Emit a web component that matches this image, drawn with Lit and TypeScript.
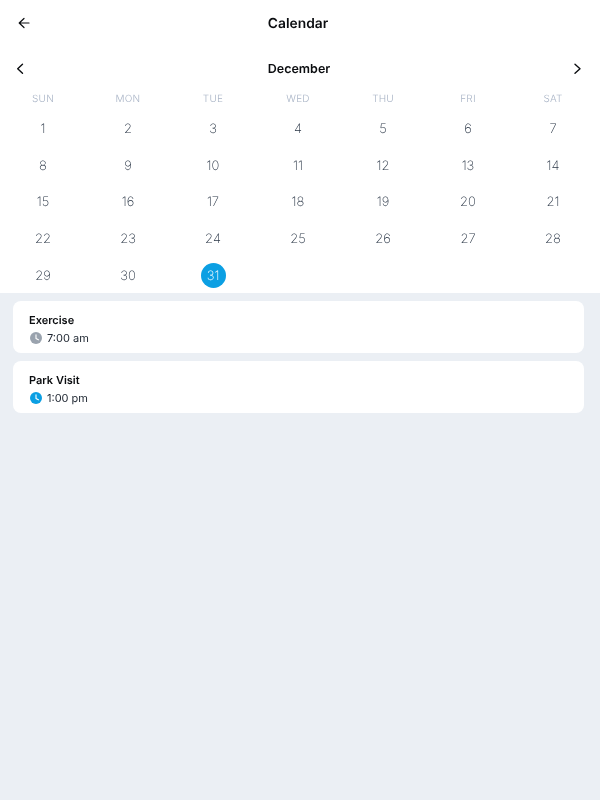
import { LitElement, html, css, svg } from "lit";
import { customElement } from "lit/decorators.js";

const DOW = ["SUN", "MON", "TUE", "WED", "THU", "FRI", "SAT"];
const DAYS = Array.from({ length: 31 }, (_, i) => i + 1);

const clock = (cls: string) => html`<svg class="clock ${cls}" viewBox="0 0 12 12" width="12" height="12">
  ${svg`<circle class="face" cx="6" cy="6" r="6"></circle>
  <path d="M6 2.8V6.4L8.4 7.8" fill="none" stroke="#fff" stroke-width="1.1" stroke-linecap="round" stroke-linejoin="round"></path>`}
</svg>`;

@customElement("app-root")
export class AppRoot extends LitElement {
  static styles = css`
    :host {
      display: block;
      width: 600px;
      height: 800px;
      background: #ebeff4;
      font-family: Inter, "Liberation Sans", sans-serif;
      color: #0b0d10;
      text-rendering: geometricPrecision;
    }
    .top { background: #fff; height: 293px; }
    .bar, .month, .grid, .title, .time { will-change: transform; }
    .bar {
      height: 47px;
      display: flex;
      align-items: center;
      justify-content: center;
      position: relative;
      padding-right: 4px;
      font-size: 13.8px;
      font-weight: 600;
    }
    .back { position: absolute; left: 17px; top: 16px; display: block; }
    .month {
      height: 18px;
      margin-top: 13px;
      padding: 0 17px 0 15px;
      display: flex;
      align-items: center;
      justify-content: space-between;
      font-size: 12.5px;
      font-weight: 600;
    }
    .grid {
      display: grid;
      grid-template-columns: repeat(7, 85px);
      padding: 0 0.5px;
    }
    .dow {
      height: 22px;
      margin-top: 10px;
      margin-bottom: 1px;
      display: flex;
      align-items: center;
      justify-content: center;
      font-size: 10px;
      font-weight: 300;
      color: #a9b4c6;
      letter-spacing: 0.2px;
    }
    .day {
      height: 36.6px;
      display: flex;
      align-items: center;
      justify-content: center;
      font-size: 13px;
      font-weight: 250;
      color: #2a3646;
    }
    .sel {
      width: 25px;
      height: 25px;
      border-radius: 50%;
      background: #0b9fe3;
      color: #fff;
      display: flex;
      align-items: center;
      justify-content: center;
    }
    .list {
      padding: 8px 16px 0 13px;
      display: flex;
      flex-direction: column;
      gap: 8px;
    }
    .card {
      background: #fff;
      border-radius: 8px;
      height: 52px;
      box-sizing: border-box;
      padding: 12px 16px 0;
    }
    .title { font-size: 11px; font-weight: 600; line-height: 14px; }
    .time {
      display: flex;
      align-items: center;
      gap: 5px;
      margin-top: 3px;
      height: 16px;
      font-size: 11px;
      font-weight: 400;
      color: #1d2530;
    }
    .clock { display: block; margin-left: 1px; }
    .gray .face { fill: #9aa3ae; }
    .blue .face { fill: #0b9fe3; }
  `;

  render() {
    return html`
      <div class="top">
        <div class="bar">
          <svg class="back" width="14" height="14" viewBox="0 0 14 14" fill="none" stroke="#0b0d10" stroke-width="1.2" stroke-linecap="round" stroke-linejoin="round">
            <path d="M12 7H2.2M7 2.5L2.2 7L7 11.5"></path>
          </svg>
          Calendar
        </div>
        <div class="month">
          <svg width="10" height="12" viewBox="0 0 10 12" fill="none" stroke="#0b0d10" stroke-width="1.4" stroke-linecap="round" stroke-linejoin="round"><path d="M7.5 1.3L2.7 5.8L7.5 10.3"></path></svg>
          <span>December</span>
          <svg width="10" height="12" viewBox="0 0 10 12" fill="none" stroke="#0b0d10" stroke-width="1.4" stroke-linecap="round" stroke-linejoin="round"><path d="M2 1.3L7 5.8L2 10.3"></path></svg>
        </div>
        <div class="grid">
          ${DOW.map((d) => html`<div class="dow">${d}</div>`)}
          ${DAYS.map((d) => html`<div class="day">${d === 31 ? html`<span class="sel">${d}</span>` : d}</div>`)}
        </div>
      </div>
      <div class="list">
        <div class="card">
          <div class="title">Exercise</div>
          <div class="time">${clock("gray")}7:00 am</div>
        </div>
        <div class="card">
          <div class="title">Park Visit</div>
          <div class="time">${clock("blue")}1:00 pm</div>
        </div>
      </div>
    `;
  }
}
